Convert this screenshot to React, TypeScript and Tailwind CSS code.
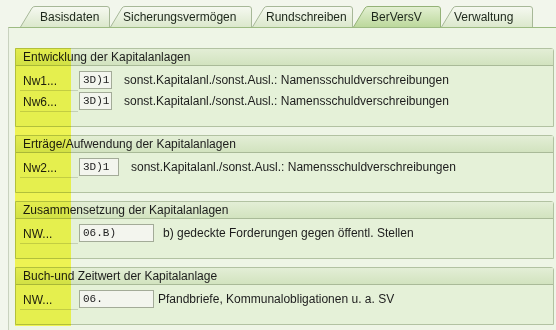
import React from "react";

const tabs = [
  { label: "Basisdaten", w: 90, pl: 20, active: false },
  { label: "Sicherungsvermögen", w: 142, pl: 13, active: false },
  { label: "Rundschreiben", w: 101, pl: 14, active: false },
  { label: "BerVersV", w: 88, pl: 18, active: true },
  { label: "Verwaltung", w: 92, pl: 13, active: false },
];

type Row = {
  label: string;
  value: string;
  fieldW: number;
  gap: number;
  text: string;
};

const groups: { title: string; rows: Row[] }[] = [
  {
    title: "Entwicklung der Kapitalanlagen",
    rows: [
      { label: "Nw1...", value: "3D)1", fieldW: 33, gap: 12, text: "sonst.Kapitalanl./sonst.Ausl.: Namensschuldverschreibungen" },
      { label: "Nw6...", value: "3D)1", fieldW: 33, gap: 12, text: "sonst.Kapitalanl./sonst.Ausl.: Namensschuldverschreibungen" },
    ],
  },
  {
    title: "Erträge/Aufwendung der Kapitalanlagen",
    rows: [
      { label: "Nw2...", value: "3D)1", fieldW: 40, gap: 12, text: "sonst.Kapitalanl./sonst.Ausl.: Namensschuldverschreibungen" },
    ],
  },
  {
    title: "Zusammensetzung der Kapitalanlagen",
    rows: [
      { label: "NW...", value: "06.B)", fieldW: 75, gap: 9, text: "b) gedeckte Forderungen gegen öffentl. Stellen" },
    ],
  },
  {
    title: "Buch-und Zeitwert der Kapitalanlage",
    rows: [
      { label: "NW...", value: "06.", fieldW: 75, gap: 4, text: "Pfandbriefe, Kommunalobligationen u. a. SV" },
    ],
  },
];

function Tab({ label, w, pl, active }: { label: string; w: number; pl: number; active: boolean }) {
  const id = active ? "tabActive" : "tabIdle";
  return (
    <div className="relative flex h-[21px] items-center" style={{ width: w, paddingLeft: pl }}>
      <svg className="absolute inset-0" width={w} height={21} viewBox={`0 0 ${w} 21`}>
        <defs>
          <linearGradient id={id} x1="0" y1="0" x2="0" y2="1">
            <stop offset="0" stopColor={active ? "#e3f0d2" : "#f6f9f1"} />
            <stop offset="1" stopColor={active ? "#bcd89c" : "#dbe8cc"} />
          </linearGradient>
        </defs>
        <path
          d={`M0.5 21 L12 2 Q13 0.5 15 0.5 L${w - 3} 0.5 Q${w - 0.5} 0.5 ${w - 0.5} 3 L${w - 0.5} 21`}
          fill={`url(#${id})`}
          stroke={active ? "#94b277" : "#a7b898"}
          strokeWidth="1"
        />
      </svg>
      <span className="relative pt-[1px] text-[12px] leading-none text-[#1c261a]">{label}</span>
    </div>
  );
}

function Group({ title, rows }: { title: string; rows: Row[] }) {
  return (
    <div className="rounded-tr-[3px] border border-[#b2c2a2] bg-[#e5f1d8]">
      <div className="flex h-[17px] items-center border-b border-[#a9ba98] bg-gradient-to-b from-[#e3eed6] to-[#d2e3bf] pl-[7px] text-[12px] leading-none text-[#1c1c1c]">
        {title}
      </div>
      <div className="flex flex-col gap-[3px] pl-[4px] pt-[5px] pb-[16px]">
        {rows.map((r, i) => (
          <div key={i} className="flex h-[18px] items-center">
            <div className="flex h-[20px] w-[58px] items-center self-start border-b border-[#c3cfb5] pl-[3px] text-[12px] leading-none text-[#1c1c1c]">
              {r.label}
            </div>
            <div
              className="ml-[1px] flex h-[18px] items-center border border-[#a3ab98] bg-[#f3f5ee] pl-[3px] font-['Liberation_Mono',monospace] text-[11px] leading-none text-[#222]"
              style={{ width: r.fieldW }}
            >
              {r.value}
            </div>
            <div className="text-[12px] leading-none text-[#1c1c1c]" style={{ marginLeft: r.gap }}>
              {r.text}
            </div>
          </div>
        ))}
      </div>
    </div>
  );
}

export default function App() {
  return (
    <div className="relative h-[330px] w-[556px] overflow-hidden bg-[#f2f6ec] font-['Liberation_Sans',Arial,sans-serif]">
      <div className="flex h-[27px] items-end pl-[20px]">
        {tabs.map((t) => (
          <Tab key={t.label} {...t} />
        ))}
      </div>
      <div className="ml-[8px] h-[303px] border-l border-t border-l-[#c9d2bf] border-t-[#9dbb82] bg-[#eef5e6] pl-[6px] pr-[2px] pt-[20px]">
        <div className="flex flex-col gap-[8px]">
          {groups.map((g) => (
            <Group key={g.title} {...g} />
          ))}
        </div>
      </div>
      {/* highlighter stroke over the label column */}
      <div className="pointer-events-none absolute left-[15px] top-[48px] h-[278px] w-[56px] bg-[#fffd5c] mix-blend-multiply" />
    </div>
  );
}
